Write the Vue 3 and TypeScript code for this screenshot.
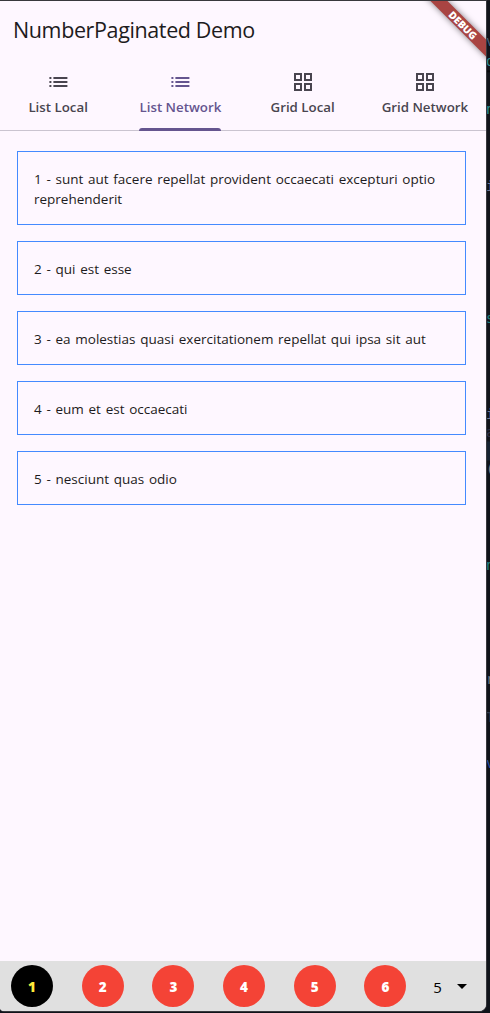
<script setup lang="ts">
import { ref } from 'vue'

interface Tab { label: string; icon: 'list' | 'grid' }

const tabs: Tab[] = [
  { label: 'List Local', icon: 'list' },
  { label: 'List Network', icon: 'list' },
  { label: 'Grid Local', icon: 'grid' },
  { label: 'Grid Network', icon: 'grid' },
]
const activeTab = ref(1)
const posts: string[] = [
  'sunt aut facere repellat provident occaecati excepturi optio reprehenderit',
  'qui est esse',
  'ea molestias quasi exercitationem repellat qui ipsa sit aut',
  'eum et est occaecati',
  'nesciunt quas odio',
]
const pages = [1, 2, 3, 4, 5, 6]
const page = ref(1)

// Fragments of the editor behind the window, visible past its right edge
const fragments = [
  { t: 'v', y: 33, c: '#46637f' },
  { t: 'd', y: 53, c: '#2f8f93' },
  { t: 'n', y: 101, c: '#2a9192' },
  { t: 'i', y: 178, c: '#747a94' },
  { t: 's', y: 310, c: '#1f8481' },
  { t: 'i', y: 406, c: '#747a94' },
  { t: 'a', y: 424, c: '#343349' },
  { t: '(', y: 461, c: '#8a8183' },
  { t: 'n', y: 557, c: '#1f8481' },
  { t: 'r', y: 671, c: '#767c89' },
  { t: 'T', y: 709, c: '#303b4c' },
  { t: 'v', y: 755, c: '#2850a4' },
]
</script>

<template>
  <div class="desktop">
    <span v-for="f in fragments" :key="f.y" class="frag" :style="{ top: f.y + 'px', color: f.c }">{{ f.t }}</span>
    <div class="window">
      <header class="title">NumberPaginated Demo</header>
      <nav class="tabs">
        <button v-for="(tab, i) in tabs" :key="tab.label" class="tab" :class="{ active: i === activeTab }" @click="activeTab = i">
          <svg class="icon" :class="tab.icon + '-icon'" width="24" height="24" viewBox="0 0 24 24" fill="currentColor">
            <path v-if="tab.icon === 'list'" d="M3 13h2v-2H3v2zm0 4h2v-2H3v2zm0-8h2V7H3v2zm4 4h14v-2H7v2zm0 4h14v-2H7v2zM7 7v2h14V7H7z" />
            <path v-else fill-rule="evenodd" d="M3 3v8h8V3H3zm6 6H5V5h4v4zm-6 4v8h8v-8H3zm6 6H5v-4h4v4zm4-16v8h8V3h-8zm6 6h-4V5h4v4zm-6 4v8h8v-8h-8zm6 6h-4v-4h4v4z" />
          </svg>
          <span class="label">{{ tab.label }}</span>
          <i v-if="i === activeTab" class="indicator"></i>
        </button>
      </nav>
      <main class="list">
        <article v-for="(p, i) in posts" :key="i" class="card">{{ i + 1 }} - {{ p }}</article>
      </main>
      <footer class="pager">
        <button v-for="n in pages" :key="n" class="page" :class="{ current: n === page }" @click="page = n">{{ n }}</button>
        <div class="size">
          <span>5</span>
          <svg width="10" height="5" viewBox="0 0 10 5"><path d="M0 0h10L5 5z" /></svg>
        </div>
      </footer>
      <div class="banner">DEBUG</div>
    </div>
  </div>
</template>

<style>
html, body { margin: 0; background: #10131a; overflow: hidden; }
</style>

<style scoped>
.desktop {
  position: relative; width: 490px; height: 1013px; overflow: hidden;
  box-sizing: border-box; padding-top: 1px;
  background: linear-gradient(#1c1b20 0 1px, #12141b 1px 70px, #020305 71px, #12141b 73px 441px, #172231 442px 460px, #10131a 461px);
  font-family: "Open Sans", "Noto Sans", sans-serif;
}
.frag {
  position: absolute; left: 486px; height: 16px; line-height: 16px;
  font-family: "DejaVu Sans Mono", monospace; font-size: 14px;
}
.window {
  position: relative; width: 486px; height: 1010px; overflow: hidden;
  display: flex; flex-direction: column; background: #fef7ff;
  border-radius: 0 0 7px 4px; box-shadow: 0 0 0 1px #38383d;
}
.title {
  height: 56px; line-height: 58px; padding-left: 13px; white-space: nowrap;
  font-size: 21.5px; letter-spacing: -0.38px; color: #1d1b20;
}
.tabs {
  display: grid; grid-template-columns: repeat(4, 1fr); height: 74px; flex: none;
  box-sizing: border-box; margin-left: -3px; border-bottom: 1px solid #cac4d0;
}
.tab {
  position: relative; border: 0; padding: 13px 0 0; background: none; color: #49454f;
  display: flex; flex-direction: column; align-items: center; font-family: inherit;
}
.tab.active { color: #65558f; }
.icon { display: block; flex: none; }
.list-icon { transform: translateX(0.4px); }
.label {
  font-size: 13.3px; font-weight: 600; line-height: 20px; margin-top: 3px;
  white-space: nowrap;
}
.indicator {
  position: absolute; bottom: -1px; width: 82px; height: 3px;
  background: #65558f; border-radius: 3px 3px 0 0;
}
.list { flex: 1; display: flex; flex-direction: column; gap: 16px; padding: 20px 20px 0 17px; }
.card {
  border: 1px solid #448aff; padding: 17px 16px 15px; line-height: 20px;
  font-size: 13.5px; letter-spacing: 0; word-spacing: 1.2px; color: #1d1b20;
}
.pager {
  height: 50px; flex: none; display: flex; align-items: center; gap: 28.7px;
  padding-left: 11px; box-sizing: border-box; background: #e0e0e0;
}
.page {
  width: 42px; height: 42px; flex: none; border: 0; padding: 2px 0 0; border-radius: 50%;
  background: #f44336; color: #fff; font: 800 13.5px/20px "Open Sans", sans-serif;
}
.page.current { background: #000; color: #ffeb3b; }
.size { display: flex; align-items: center; gap: 15px; margin-left: -2px; font-size: 15px; line-height: 20px; padding-top: 1px; }
.banner {
  position: absolute; left: 413px; top: 18px; width: 100px; height: 12px;
  transform: rotate(45deg); background: #a94442; color: #fff;
  box-shadow: 0 0 6px rgba(0, 0, 0, .5); text-align: center;
  font-size: 10.2px; line-height: 12px; font-weight: 800; letter-spacing: 0;
}
</style>
